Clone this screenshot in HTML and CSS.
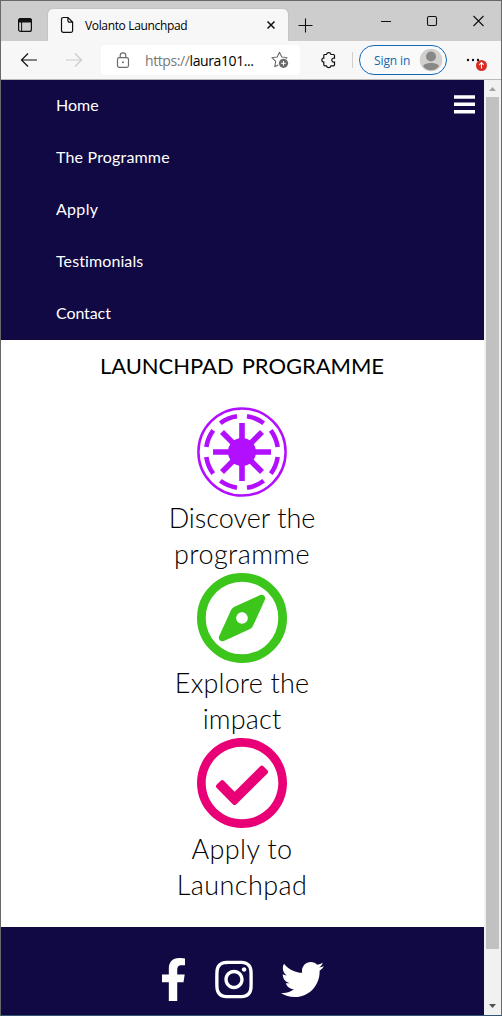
FILE: index.html
```html
<!DOCTYPE html>
<html lang="en">
<head>
<meta charset="utf-8">
<title>Volanto Launchpad</title>
<link rel="stylesheet" href="styles.css">
</head>
<body>
<div class="window">
  <div class="tabbar">
    <svg class="tab-actions" width="16" height="16" viewBox="0 0 16 16"><rect x="1.6" y="1.6" width="12.8" height="12.8" rx="2" fill="none" stroke="#111" stroke-width="1.2"/><path d="M1.5 5V3.5a2 2 0 0 1 2-2h9a2 2 0 0 1 2 2V5zM4.6 5v9" stroke="#111" fill="#111"/></svg>
    <div class="tab">
      <svg width="14" height="18" viewBox="0 0 14 18"><path d="M3.2 1.5H8L12.6 6v8.6a1.7 1.7 0 0 1-1.7 1.7H3.2a1.7 1.7 0 0 1-1.7-1.7V3.200a1.700 1.700 0 0 1 1.700-1.700zM7.900 1.600v3a1.600 1.600 0 0 0 1.600 1.600h3" fill="none" stroke="#111" stroke-width="1.2"/></svg>
      <span class="tab-title">Volanto Launchpad</span>
      <svg class="tab-close" width="10" height="10" viewBox="0 0 10 10"><path d="M1.500 1.500l7 7M8.500 1.500l-7 7" stroke="#111" stroke-width="1.500"/></svg>
    </div>
    <svg class="new-tab" width="16" height="16" viewBox="0 0 16 16"><path d="M0.500 8.500h14M7.500 1.500v14" stroke="#111" stroke-width="1.100"/></svg>
    <svg class="win-controls" width="104" height="14" viewBox="0 0 104 14"><path d="M0 7.500h10M92.500 2l10 10M102.500 2l-10 10" stroke="#111" stroke-width="1.100"/><rect x="46.500" y="2.500" width="9" height="9" rx="1.500" fill="none" stroke="#111" stroke-width="1.100"/></svg>
  </div>
  <div class="toolbar">
    <svg class="back" width="18" height="16" viewBox="0 0 18 16"><path d="M1.500 8H17M8 1.500L1.500 8 8 14.500" fill="none" stroke="#111" stroke-width="1.200"/></svg>
    <svg class="forward" width="18" height="16" viewBox="0 0 18 16"><path d="M1 8H16.500M10 1.500L16.500 8 10 14.500" fill="none" stroke="#ccc" stroke-width="1.200"/></svg>
    <div class="address">
      <svg width="14" height="17" viewBox="0 0 14 17"><rect x="1.500" y="5.600" width="11" height="9.800" rx="1.800" fill="none" stroke="#6b6b6b" stroke-width="1.200"/><path d="M4.200 5.500V3.600a2.800 2.800 0 0 1 5.600 0v1.900" fill="none" stroke="#6b6b6b" stroke-width="1.200"/><circle cx="7" cy="10.300" r="1" fill="#6b6b6b"/></svg>
      <span class="url"><span class="scheme">https://</span>laura101...</span>
      <svg class="star" width="20" height="19" viewBox="0 0 20 19"><path d="M8.500 1.200l2.300 4.800 5.300.7-3.900 3.700.9 5.200-4.600-2.400-4.700 2.500.900-5.300L.900 6.700l5.300-.7z" fill="none" stroke="#6b6b6b" stroke-width="1.100" stroke-linejoin="round"/><circle cx="12.500" cy="12.300" r="5.500" fill="#fff"/><circle cx="12.500" cy="12.300" r="4.600" fill="#6b6b6b"/><path d="M10.200 12.300h4.600M12.500 10v4.600" stroke="#fff"/></svg>
    </div>
    <svg class="puzzle" width="16" height="18" viewBox="0 0 16 18"><path d="M3.800 3.500H5.500a2.300 2.300 0 0 1 4.500 0h2.500a1 1 0 0 1 1 1v2.600a2.100 2.100 0 1 0 0 4v2.700a1 1 0 0 1-1 1H10a2.300 2.300 0 0 1-4.500 0H3.800a1 1 0 0 1-1-1v-2.700a2 2 0 0 1 0-4V4.500a1 1 0 0 1 1-1z" fill="none" stroke="#111" stroke-width="1.200"/></svg>
    <div class="divider"></div>
    <div class="signin"><span>Sign in</span>
      <svg width="24" height="24" viewBox="0 0 24 24"><circle cx="12" cy="12" r="11.300" fill="#d2d0ce"/><circle cx="12" cy="8.500" r="5" fill="#8a8886"/><path d="M4 18.200C5.500 14 18.500 14 20 18.200 16 23.500 8 23.500 4 18.200z" fill="#8a8886"/></svg>
    </div>
    <svg class="more" width="22" height="16" viewBox="0 0 22 16"><g fill="#111"><circle cx="2" cy="5" r="1.200"/><circle cx="7" cy="5" r="1.200"/><circle cx="12" cy="5" r="1.200"/></g><circle cx="15.500" cy="10.500" r="5.500" fill="#d92c23"/><path d="M15.500 13.500V8M13.300 9.800l2.200-2.200 2.200 2.200" fill="none" stroke="#fff" stroke-width="1.100"/></svg>
  </div>
  <div class="viewport">
    <div class="page">
      <header class="site-header">
        <nav class="nav">
          <a class="nav-link">Home</a>
          <a class="nav-link programme">The Programme</a>
          <a class="nav-link apply">Apply</a>
          <a class="nav-link testimonials">Testimonials</a>
          <a class="nav-link contact">Contact</a>
        </nav>
        <svg class="burger" width="21" height="19" viewBox="0 0 21 19"><path d="M0 2h21M0 9.300h21M0 16.700h21" stroke="#fff" stroke-width="3.500"/></svg>
      </header>
      <main class="main">
        <h1 class="title">LAUNCHPAD PROGRAMME</h1>
        <section class="card">
          <svg class="card-icon" viewBox="-45 -45 90 90"><g fill="none" stroke="#b30fff"><circle r="43.600" stroke-width="2.500"/><circle r="36" stroke-width="4.600" pathLength="360" stroke-dasharray="29 16" stroke-dashoffset="-8"/><path d="M-29 0H29M0-29V29" stroke-width="5.600"/><path d="M-20-20L20 20M20-20L-20 20" stroke-width="5.600"/></g><circle r="14" fill="#b30fff"/></svg>
          <p class="card-text">Discover the<br><span class="wide">programme</span></p>
        </section>
        <section class="card">
          <svg class="card-icon" viewBox="8 8 496 496"><path fill="#3cc51b" d="M347.940 129.860L203.600 195.830a31.938 31.938 0 0 0-15.770 15.770l-65.970 144.340c-7.610 16.650 9.540 33.810 26.200 26.200l144.340-65.970a31.938 31.938 0 0 0 15.770-15.770l65.970-144.340c7.600-16.660-9.540-33.810-26.200-26.200zm-77.360 148.720c-12.470 12.470-32.690 12.470-45.160 0-12.470-12.470-12.470-32.690 0-45.160 12.470-12.470 32.690-12.470 45.160 0 12.470 12.470 12.470 32.690 0 45.160z" transform="translate(8 0)"/><circle cx="256" cy="256" r="224" fill="none" stroke="#3cc51b" stroke-width="48"/></svg>
          <p class="card-text"><span class="slight">Explore the</span><br><span class="slight">impact</span></p>
        </section>
        <section class="card">
          <svg class="card-icon" viewBox="8 8 496 496"><path fill="#e90076" d="M256 8C119.033 8 8 119.033 8 256s111.033 248 248 248 248-111.033 248-248S392.967 8 256 8zm0 48c110.532 0 200 89.451 200 200 0 110.532-89.451 200-200 200-110.532 0-200-89.451-200-200 0-110.532 89.451-200 200-200m140.204 130.267l-22.536-22.718c-4.667-4.705-12.265-4.736-16.970-.068L215.346 303.697l-59.792-60.277c-4.667-4.705-12.265-4.736-16.970-.069l-22.719 22.536c-4.705 4.667-4.736 12.265-.068 16.971l90.781 91.516c4.667 4.705 12.265 4.736 16.970.068l172.589-171.204c4.704-4.668 4.734-12.266.067-16.971z"/></svg>
          <p class="card-text"><span class="wide">Apply to</span><br><span class="wide">Launchpad</span></p>
        </section>
      </main>
      <footer class="site-footer">
        <svg width="27" height="43" viewBox="0 0 320 512" fill="#fff"><path d="M279.140 288l14.220-92.660h-88.910v-60.130c0-25.350 12.420-50.060 52.240-50.060h40.420V6.260S260.430 0 225.360 0c-73.220 0-121.080 44.380-121.080 124.720v70.620H22.890V288h81.390v224h100.170V288z"/></svg>
        <svg width="38" height="43" viewBox="0 0 448 512" fill="#fff"><path d="M224.100 141c-63.600 0-114.900 51.300-114.900 114.900s51.300 114.900 114.900 114.900S339 319.500 339 255.900 287.700 141 224.100 141zm0 189.600c-41.100 0-74.700-33.500-74.700-74.700s33.500-74.700 74.700-74.700 74.700 33.500 74.700 74.700-33.600 74.700-74.700 74.700zm146.400-194.300c0 14.900-12 26.800-26.800 26.800-14.900 0-26.800-12-26.800-26.800s12-26.800 26.800-26.800 26.800 12 26.800 26.800zm76.100 27.200c-1.700-35.900-9.900-67.700-36.200-93.900-26.200-26.200-58-34.400-93.900-36.200-37-2.100-147.900-2.100-184.900 0-35.800 1.700-67.600 9.900-93.900 36.100s-34.400 58-36.200 93.900c-2.100 37-2.100 147.900 0 184.900 1.700 35.900 9.900 67.700 36.200 93.900s58 34.400 93.900 36.200c37 2.100 147.900 2.100 184.900 0 35.900-1.700 67.700-9.900 93.900-36.200 26.200-26.200 34.400-58 36.200-93.900 2.100-37 2.100-147.800 0-184.800zM398.800 388c-7.800 19.600-22.900 34.700-42.600 42.600-29.500 11.700-99.500 9-132.100 9s-102.700 2.600-132.100-9c-19.600-7.800-34.700-22.900-42.600-42.600-11.700-29.500-9-99.500-9-132.100s-2.600-102.700 9-132.100c7.800-19.600 22.900-34.700 42.600-42.600 29.500-11.700 99.500-9 132.100-9s102.700-2.600 132.100 9c19.600 7.800 34.700 22.900 42.600 42.600 11.700 29.500 9 99.500 9 132.100s2.700 102.700-9 132.100z"/></svg>
        <svg width="43" height="43" viewBox="0 0 512 512" fill="#fff"><path d="M459.370 151.716c.325 4.548.325 9.097.325 13.645 0 138.720-105.583 298.558-298.558 298.558-59.452 0-114.680-17.219-161.137-47.106 8.447.974 16.568 1.299 25.340 1.299 49.055 0 94.213-16.568 130.274-44.832-46.132-.975-84.792-31.188-98.112-72.772 6.498.974 12.995 1.624 19.818 1.624 9.421 0 18.843-1.300 27.614-3.573-48.081-9.747-84.143-51.980-84.143-102.985v-1.299c13.969 7.797 30.214 12.670 47.431 13.319-28.264-18.843-46.781-51.005-46.781-87.391 0-19.492 5.197-37.360 14.294-52.954 51.655 63.675 129.300 105.258 216.365 109.807-1.624-7.797-2.599-15.918-2.599-24.040 0-57.828 46.782-104.934 104.934-104.934 30.213 0 57.502 12.670 76.670 33.137 23.715-4.548 46.456-13.320 66.599-25.340-7.798 24.366-24.366 44.833-46.132 57.827 21.117-2.273 41.584-8.122 60.426-16.243-14.292 20.791-32.161 39.308-52.628 54.253z"/></svg>
      </footer>
    </div>
    <div class="scrollbar">
      <svg width="17" height="17" viewBox="0 0 17 17"><path d="M5 11l3.500-4L12 11z" fill="#a3a3a3"/></svg>
      <div class="thumb"></div>
      <svg width="17" height="17" viewBox="0 0 17 17"><path d="M5 6l3.500 4L12 6z" fill="#505050"/></svg>
    </div>
  </div>
</div>
</body>
</html>
```
FILE: styles.css
```css
* { box-sizing: border-box; }
body { margin: 0; font-family: Lato, sans-serif; font-variant-ligatures: none; color: #000; overflow: hidden; }
svg { display: block; flex: none; }
.window { width: 502px; height: 1016px; display: flex; flex-direction: column; border: 1px solid #686868; border-bottom-color: #315674; background: #fff; }
.tabbar { height: 40px; flex: none; background: #cdcdcd; display: flex; align-items: flex-end; font-family: "Open Sans", sans-serif; }
.tab-actions { margin: 0 15px 8px 16px; }
.tab { width: 240px; height: 32px; background: #f7f7f7; border-radius: 5px 5px 0 0; display: flex; align-items: center; padding: 0 12px; box-shadow: 0 0 2px #aaa; clip-path: inset(-3px -3px 0 -3px); }
.tab-title { margin-left: 11px; font-size: 12px; letter-spacing: -0.35px; flex: 1; white-space: nowrap; }
.new-tab { margin: 0 67px 8px 10px; }
.win-controls { margin-bottom: 13px; }
.toolbar { height: 39px; flex: none; background: #f7f7f7; border-bottom: 1px solid #b9b9b9; display: flex; align-items: center; font-family: "Open Sans", sans-serif; }
.back { margin-left: 19px; }
.forward { margin-left: 27px; }
.address { width: 199px; height: 30px; margin-left: 18px; background: #fff; border-radius: 4px; display: flex; align-items: center; padding-left: 15px; }
.url { font-size: 14px; margin-left: 15px; letter-spacing: -0.4px; width: 126px; white-space: nowrap; }
.scheme { color: #777; }
.puzzle { margin-left: 21px; }
.divider { width: 1px; height: 16px; background: #d0d0d0; margin: 0 6px 0 15px; }
.signin { width: 88px; height: 30px; border: 1px solid #1069b5; border-radius: 15px; display: flex; align-items: center; justify-content: space-between; padding: 0 3px 0 14px; color: #1069b5; font-size: 12px; letter-spacing: -0.1px; background: #fafafa; }
.more { margin: 5px 0 0 19px; }
.viewport { flex: 1; display: flex; min-height: 0; }
.page { width: 483px; display: flex; flex-direction: column; }
.site-header { height: 260px; flex: none; background: #100943; display: flex; justify-content: space-between; padding-right: 9px; }
.nav { padding-left: 55px; display: flex; flex-direction: column; }
.nav-link { height: 52px; line-height: 50px; color: #fff; font-size: 16px; }
.programme { letter-spacing: 0.18px; }
.apply { letter-spacing: 0.3px; }
.testimonials { letter-spacing: 0.1px; }
.contact { letter-spacing: -0.1px; }
.burger { margin-top: 15px; }
.main { height: 587px; flex: none; display: flex; flex-direction: column; align-items: center; padding-right: 1px; }
.title { margin: 0 0 31px; padding-top: 15px; font-size: 22px; line-height: 21px; font-weight: 400; white-space: nowrap; letter-spacing: -0.05px; word-spacing: 2.500px; }
.card { display: flex; flex-direction: column; align-items: center; height: 165.500px; }
.card-icon { width: 90px; height: 90px; }
.card-text { margin: 2.500px 0 0; font-size: 27px; line-height: 36px; font-weight: 300; text-align: center; }
.wide { letter-spacing: 0.4px; }
.slight { letter-spacing: 0.15px; }
.site-footer { flex: 1; background: #100943; display: flex; justify-content: center; gap: 28px; padding: 31px 1px 0 0; }
.scrollbar { width: 17px; background: #f1f1f1; display: flex; flex-direction: column; align-items: center; justify-content: space-between; }
.thumb { width: 13px; height: 852px; margin-bottom: 49px; background: #c1c1c1; }
```
